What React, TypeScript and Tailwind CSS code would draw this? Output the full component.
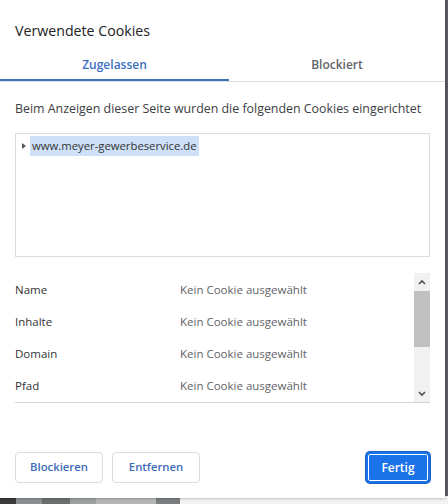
import React from "react";

const rows = ["Name", "Inhalte", "Domain", "Pfad"];

export default function App() {
  return (
    <div
      className="relative h-[504px] w-[448px] overflow-hidden bg-[#5b5f63]"
      style={{ fontFamily: '"Open Sans", "Noto Sans", sans-serif' }}
    >
      {/* backdrop strip below the dialog */}
      <div className="absolute bottom-0 left-0 flex h-[8px] w-full">
        <div className="w-[16px] bg-[#3a3a3a]" />
        <div className="w-[26px] bg-[#8d9092]" />
        <div className="w-[28px] bg-[#6c6f70]" />
        <div className="w-[26px] bg-[#9ea1a1]" />
        <div className="w-[60px] bg-[#b4b6b5]" />
        <div className="w-[24px] bg-[#7b7e80]" />
        <div className="w-[268px] bg-[#f2f2f2]" />
      </div>

      <div className="relative flex h-[498px] w-[445px] flex-col bg-white shadow-[0_0_3px_rgba(0,0,0,0.35)]">
        <h1 className="px-[15px] pt-[20px] text-[14.2px] leading-[22px] text-[#202124]">
          Verwendete Cookies
        </h1>

        <div className="mt-[12px] flex border-b border-[#dadce0]">
          <div className="flex w-[229px] justify-center border-b-2 border-[#3c74b8] pb-[5px] pt-[2px] text-[12px] font-semibold text-[#3a6fbf]">
            Zugelassen
          </div>
          <div className="flex flex-1 justify-center pb-[5px] pt-[2px] text-[12px] font-semibold text-[#5f6368]">
            Blockiert
          </div>
        </div>

        <p className="whitespace-nowrap px-[15px] pt-[18px] text-[12.4px] leading-[18px] text-[#3c4043]">
          Beim Anzeigen dieser Seite wurden die folgenden Cookies eingerichtet
        </p>

        <div className="mx-[15px] mt-[15px] h-[124px] w-[415px] border border-[#dcdcdc] px-[2px] pt-[2px]">
          <div className="flex items-center">
            <svg width="12" height="20" viewBox="0 0 12 20" className="shrink-0">
              <path d="M4 7 L8 10 L4 13 Z" fill="#555" />
            </svg>
            <span className="bg-[#cde0f7] px-[2px] text-[11.3px] leading-[20px] text-[#333]">
              www.meyer-gewerbeservice.de
            </span>
          </div>
        </div>

        <div className="mx-[15px] mt-[16px] flex h-[130px] w-[415px] border-b border-[#d5d5d5]">
          <div className="flex flex-1 flex-col pt-[1px]">
            {rows.map((r) => (
              <div key={r} className="flex h-[32px] items-center text-[11.5px] text-[#333]">
                <span className="w-[165px]">{r}</span>
                <span className="text-[#5f6368]">Kein Cookie ausgewählt</span>
              </div>
            ))}
          </div>
          <div className="flex w-[16px] flex-col bg-[#f1f1f1]">
            <div className="flex h-[18px] items-center justify-center">
              <svg width="8" height="6" viewBox="0 0 8 6">
                <path d="M1 5 L4 2 L7 5" stroke="#505050" strokeWidth="1.6" fill="none" />
              </svg>
            </div>
            <div className="h-[56px] bg-[#c1c1c1]" />
            <div className="flex-1" />
            <div className="flex h-[17px] items-center justify-center">
              <svg width="8" height="6" viewBox="0 0 8 6">
                <path d="M1 1 L4 4 L7 1" stroke="#505050" strokeWidth="1.6" fill="none" />
              </svg>
            </div>
          </div>
        </div>

        <div className="mt-auto flex items-center gap-[9px] px-[15px] pb-[15px]">
          <button className="h-[31px] w-[88px] rounded-[4px] border border-[#dadce0] text-[11.3px] font-semibold text-[#3d6bb8]">
            Blockieren
          </button>
          <button className="h-[31px] w-[88px] rounded-[4px] border border-[#dadce0] text-[11.3px] font-semibold text-[#3d6bb8]">
            Entfernen
          </button>
          <button className="ml-auto h-[31px] w-[64px] rounded-[4px] border-2 border-[#1a73e8] bg-[#1a73e8] text-[12px] font-semibold text-white shadow-[inset_0_0_0_1px_#ffffff,0_0_0_1px_#1a5fc4]">
            Fertig
          </button>
        </div>
      </div>
    </div>
  );
}
